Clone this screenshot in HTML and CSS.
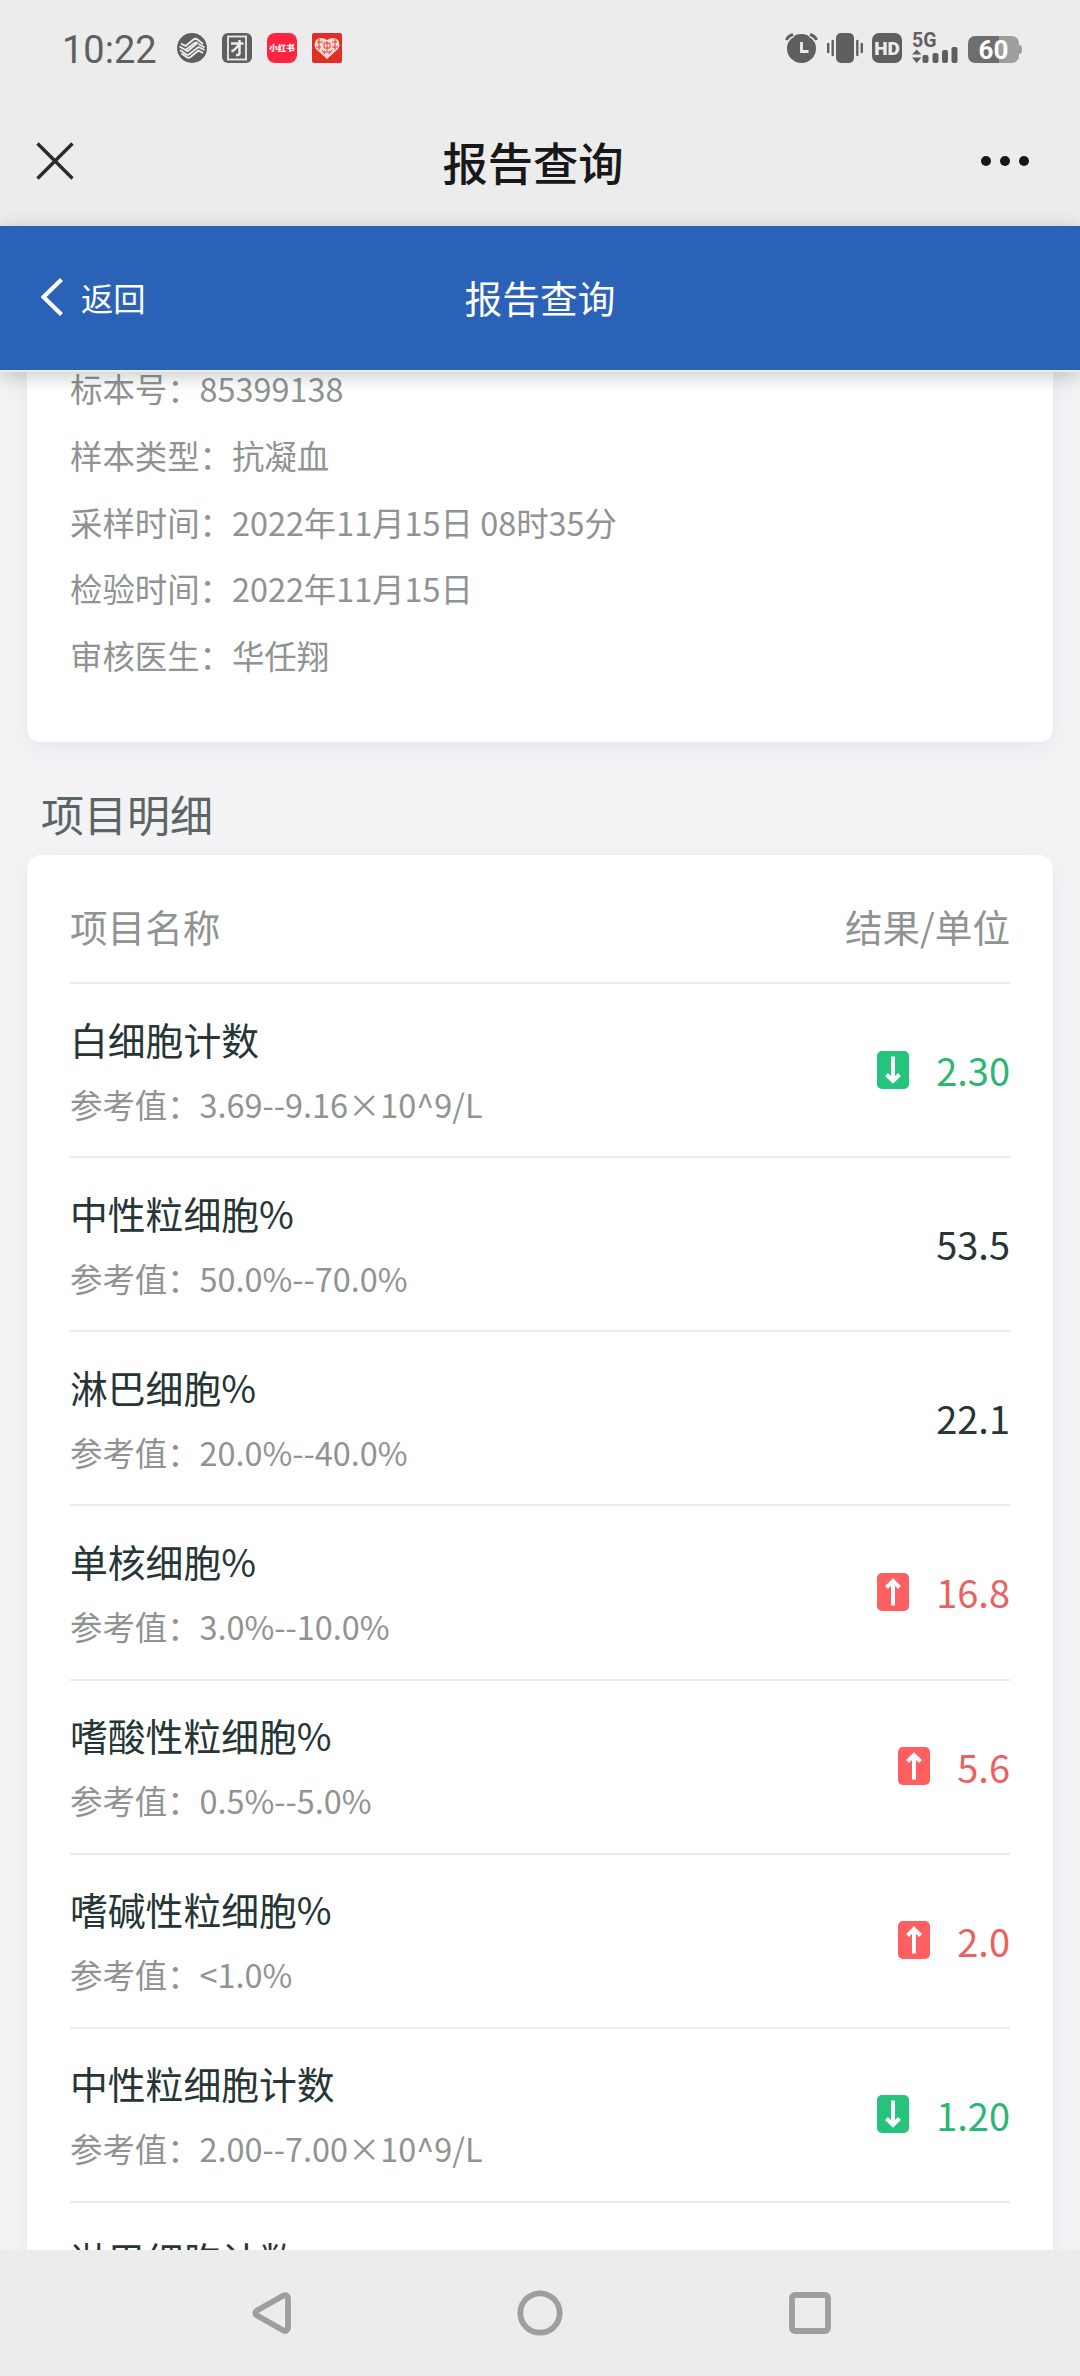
FILE: index.html
```
<!DOCTYPE html>
<html lang="zh-CN">
<head>
    <meta charset="UTF-8">
    <title>报告查询</title>
    <link rel="stylesheet" href="styles.css">
</head>
<body>

<div class="status-bar">
    <span class="clock">10:22</span>
    <svg class="app-icon" viewBox="0 0 30 30">
        <circle cx="15" cy="15" r="15" fill="#5f5f5f"/>
        <g fill="none" stroke="#ececec" stroke-width="1.8" stroke-linejoin="round">
            <path d="M4 10.500l4.500 2.500 8-6.500q2-1.500 4 0l5.500 4.500"/>
            <path d="M2.500 13.500l6 3.500 9-7q1.500-1 3 0l-9 7.500q-1.500 1-3 0"/>
            <path d="M27.500 14.500l-6-3.500M27.500 17l-6-3-9 7q-2 1.500-4 0L3 17"/>
            <path d="M26 20l-4.500-2.500-8 6.500q-2 1.500-4 0L4.500 20.500"/>
        </g>
    </svg>
    <svg class="app-icon" viewBox="0 0 30 30">
        <rect width="30" height="30" rx="6" fill="#5f5f5f"/>
        <rect x="6" y="3.500" width="18" height="23" fill="none" stroke="#ececec" stroke-width="1.800"/>
        <path d="M9 10.500h12.500M17.500 7v13.500q0 2-3.500 1.500M17 11q-3 5.500-7.500 7.500" fill="none" stroke="#ececec" stroke-width="2.500"/>
    </svg>
    <span class="app-icon app-red">小红书</span>
    <svg class="app-icon" viewBox="0 0 30 30">
        <rect width="30" height="30" rx="2" fill="#e02e24"/>
        <path d="M15 26L4 16Q1 12 4 7q5-4 11 0 6-4 11 0 3 5 0 9z" fill="#fbdcd8"/>
        <path d="M5 9h6M7 6v11M4 14h5M20 9h5M23 6v11M20 14h6M11 19h8M12 10h6v5h-6zM15 8v10M10 17l3 4M20 17l-3 4" fill="none" stroke="#e02e24" stroke-width=".9"/>
    </svg>

    <div class="system-icons">
        <svg width="34" height="30" viewBox="0 0 34 30">
            <circle cx="16.500" cy="15.500" r="14.500" fill="#5f5f5f"/>
            <path d="M1.500 7Q3 3 8 1.500M31.500 7Q30 3 25 1.500" fill="none" stroke="#ececec" stroke-width="6"/>
            <path d="M1.500 7Q3 3 8 1.500M31.500 7Q30 3 25 1.500" fill="none" stroke="#5f5f5f" stroke-width="3"/>
            <path d="M16.500 9v9.500h7" fill="none" stroke="#ececec" stroke-width="2.800"/>
        </svg>
        <svg class="vibrate" width="36" height="30" viewBox="0 0 36 30">
            <rect x="9" width="18" height="30" rx="5" fill="#5f5f5f"/>
            <path d="M1.200 11v8M5.700 8v14M30.300 8v14M34.800 11v8" stroke="#5f5f5f" stroke-width="2.400" stroke-linecap="round"/>
        </svg>
        <span class="hd">HD</span>
        <div class="signal">
            <span class="network">5G</span>
            <svg width="46" height="16" viewBox="0 14 46 16" fill="#5f5f5f">
                <path d="M0 21.500l4.700-5 4.700 5zM0 24.500l4.700 5.500 4.700-5.500z"/>
                <rect x="10.500" y="22" width="6" height="8" rx="2"/>
                <rect x="20.500" y="20" width="6" height="10" rx="2"/>
                <rect x="30" y="17" width="6" height="13" rx="2"/>
                <rect x="39.500" y="14" width="6" height="16" rx="2"/>
            </svg>
        </div>
        <span class="battery">60</span>
    </div>
</div>

<div class="wx-bar">
    <svg width="38" height="38" viewBox="0 0 38 38">
        <path d="M1.500 1.500l35 35M36.500 1.500l-35 35" stroke="#2b2b2b" stroke-width="3.400"/>
    </svg>
    <h1>报告查询</h1>
    <svg width="50" height="12" viewBox="0 0 50 12" fill="#181818">
        <circle cx="6" cy="6" r="5"/>
        <circle cx="25" cy="6" r="5"/>
        <circle cx="44" cy="6" r="5"/>
    </svg>
</div>

<div class="nav-bar">
    <a class="back">
        <svg width="22" height="38" viewBox="0 0 22 38">
            <path d="M20.500 1.500L2.500 19l18 17.500" fill="none" stroke="#fff" stroke-width="4.200"/>
        </svg>
        返回
    </a>
    <h2>报告查询</h2>
</div>

<div class="content">
    <div class="card info">
        <p>标本号：85399138</p>
        <p>样本类型：抗凝血</p>
        <p>采样时间：2022年11月15日 08时35分</p>
        <p>检验时间：2022年11月15日</p>
        <p>审核医生：华任翔</p>
    </div>

    <h3>项目明细</h3>

    <div class="card">
        <div class="row head">
            <span>项目名称</span>
            <span>结果/单位</span>
        </div>
        <div class="row">
            <div>
                <p class="name">白细胞计数</p>
                <p class="range">参考值：3.69--9.16×10^9/L</p>
            </div>
            <div class="value low">
                <svg viewBox="0 0 32 38"><path d="M16 5.500v24M9.500 23.500l6.500 6.500 6.500-6.500"/></svg>
                2.30
            </div>
        </div>
        <div class="row">
            <div>
                <p class="name">中性粒细胞%</p>
                <p class="range">参考值：50.0%--70.0%</p>
            </div>
            <div class="value">53.5</div>
        </div>
        <div class="row">
            <div>
                <p class="name">淋巴细胞%</p>
                <p class="range">参考值：20.0%--40.0%</p>
            </div>
            <div class="value">22.1</div>
        </div>
        <div class="row">
            <div>
                <p class="name">单核细胞%</p>
                <p class="range">参考值：3.0%--10.0%</p>
            </div>
            <div class="value high">
                <svg viewBox="0 0 32 38"><path d="M16 32.500v-24M9.500 14.500L16 8l6.500 6.500"/></svg>
                16.8
            </div>
        </div>
        <div class="row">
            <div>
                <p class="name">嗜酸性粒细胞%</p>
                <p class="range">参考值：0.5%--5.0%</p>
            </div>
            <div class="value high">
                <svg viewBox="0 0 32 38"><path d="M16 32.500v-24M9.500 14.500L16 8l6.500 6.500"/></svg>
                5.6
            </div>
        </div>
        <div class="row">
            <div>
                <p class="name">嗜碱性粒细胞%</p>
                <p class="range">参考值：&lt;1.0%</p>
            </div>
            <div class="value high">
                <svg viewBox="0 0 32 38"><path d="M16 32.500v-24M9.500 14.500L16 8l6.500 6.500"/></svg>
                2.0
            </div>
        </div>
        <div class="row">
            <div>
                <p class="name">中性粒细胞计数</p>
                <p class="range">参考值：2.00--7.00×10^9/L</p>
            </div>
            <div class="value low">
                <svg viewBox="0 0 32 38"><path d="M16 5.500v24M9.500 23.500l6.500 6.500 6.500-6.500"/></svg>
                1.20
            </div>
        </div>
        <div class="row">
            <div>
                <p class="name">淋巴细胞计数</p>
            </div>
        </div>
    </div>
</div>

<div class="system-nav">
    <svg viewBox="0 0 46 46"><path d="M41 8v30q-1 4-4.500 2.500L10 25.500q-3.500-2.500 0-5L36.500 5.500Q40 4 41 8z"/></svg>
    <svg viewBox="0 0 46 46"><circle cx="23" cy="23" r="19.700"/></svg>
    <svg viewBox="0 0 46 46"><rect x="5" y="5" width="36" height="36" rx="3"/></svg>
</div>

</body>
</html>
```

FILE: styles.css
```
body {
    display: flex;
    flex-direction: column;
    width: 1080px;
    height: 2376px;
    margin: 0;
    overflow: hidden;
    background: #f3f3f6;
    font-family: "Noto Sans CJK SC", sans-serif;
    font-size: 37.800px;
    color: #263535;
}
h1, h2, h3, p {
    margin: 0;
    font-weight: normal;
}
svg {
    display: block;
    flex: none;
}
.status-bar {
    display: flex;
    align-items: center;
    box-sizing: border-box;
    height: 96px;
    padding: 0 60px 0 62px;
    background: #ececec;
    color: #5f5f5f;
}
.clock {
    width: 100px;
    margin-right: 15px;
    padding-top: 4px;
    font-family: Roboto, sans-serif;
    font-size: 38px;
}
.app-icon {
    width: 30px;
    height: 30px;
    margin-right: 15px;
}
.app-red {
    border-radius: 8px;
    background: #ff2442;
    color: #fff;
    font-size: 8.500px;
    font-weight: 900;
    line-height: 29px;
    text-align: center;
    white-space: nowrap;
}
.system-icons {
    display: flex;
    align-items: center;
    margin-left: auto;
}
.vibrate {
    margin-left: 8px;
}
.hd {
    width: 30px;
    height: 30px;
    margin: 0 10px 0 9px;
    border-radius: 7px;
    background: #5f5f5f;
    color: #ececec;
    font: 900 19px/31px Roboto, sans-serif;
    text-align: center;
}
.signal {
    display: flex;
    flex-direction: column;
    width: 46px;
    height: 30px;
}
.network {
    height: 14px;
    font: bold 19.500px/15px Roboto, sans-serif;
}
.battery {
    position: relative;
    width: 51px;
    height: 27px;
    margin: 3px 1px 0 10px;
    border-radius: 7px;
    background: linear-gradient(90deg, #6e6e6e 60%, #9e9e9e 60%);
    color: #fff;
    font: bold 26px/28px Roboto, sans-serif;
    text-align: center;
}
.battery::after {
    content: "";
    position: absolute;
    left: 51px;
    top: 9px;
    width: 3px;
    height: 9px;
    border-radius: 0 3px 3px 0;
    background: #9e9e9e;
}
.wx-bar {
    display: flex;
    align-items: center;
    justify-content: space-between;
    box-sizing: border-box;
    height: 130px;
    padding: 0 50px 0 36px;
    background: #ececec;
    color: #181818;
}
.wx-bar h1 {
    padding-left: 12px;
    font-size: 45.300px;
    font-weight: 500;
    line-height: 130px;
}
.nav-bar {
    display: grid;
    grid-template-columns: 1fr auto 1fr;
    align-items: center;
    position: relative;
    z-index: 1;
    box-sizing: border-box;
    height: 146px;
    padding-bottom: 3px;
    border-bottom: 2px solid #e9eff8;
    background: #2a62b7;
    box-shadow: 0 4px 18px rgba(0, 0, 0, .22);
    color: #fff;
}
.nav-bar h2 {
    font-size: 37.700px;
}
.back {
    display: flex;
    align-items: center;
    gap: 18px;
    padding-left: 41px;
    font-size: 32.300px;
}
.content {
    flex: 1;
    min-height: 0;
    padding: 0 27px;
    overflow: hidden;
}
.card {
    padding: 0 43px;
    border-radius: 14px;
    background: #fff;
    box-shadow: 0 6px 28px rgba(0, 0, 50, .05);
}
/* scrolled up under the nav bar */
.info {
    margin-top: -17px;
    padding-bottom: 53px;
    color: #8f9391;
    font-size: 32.400px;
    line-height: 66.800px;
}
h3 {
    padding: 35px 0 6px 14px;
    color: #5b6564;
    font-size: 43px;
    line-height: 72px;
}
.row {
    display: flex;
    align-items: center;
    justify-content: space-between;
    box-sizing: border-box;
    height: 174.150px;
    border-bottom: 2px solid #ededee;
}
.head {
    height: 129px;
    padding-top: 14px;
    color: #8f9391;
    font-size: 37.600px;
}
.name {
    padding-top: 2px;
    line-height: 64px;
}
.range {
    color: #8f9391;
    font-size: 32.400px;
    line-height: 65px;
}
.row:last-child {
    align-items: flex-start;
    padding-top: 22px;
}
.value {
    display: flex;
    align-items: center;
    gap: 27px;
    font-size: 38px;
    line-height: 54px;
}
.value svg {
    width: 32px;
    height: 38px;
    margin-top: -1px;
    border-radius: 5px;
    fill: none;
    stroke: #fff;
    stroke-width: 4;
}
.low {
    color: #2bb673;
}
.low svg {
    background: #25c37c;
}
.high {
    color: #ea6160;
}
.high svg {
    background: #ff5f61;
}
.system-nav {
    display: flex;
    align-items: center;
    justify-content: center;
    gap: 224px;
    height: 126px;
    background: #ececec;
}
.system-nav svg {
    width: 46px;
    height: 46px;
    fill: none;
    stroke: #9e9e9e;
    stroke-width: 5.800;
    stroke-linejoin: round;
}
```
